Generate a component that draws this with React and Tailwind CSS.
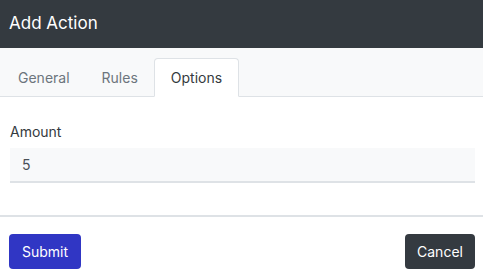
export default function App() {
	return (
		<div className="w-[483px] h-[278px] bg-white font-['Inter',sans-serif] text-[#212529] overflow-hidden">
			<div className="h-[48px] bg-[#343a40] flex items-center px-[9px]">
				<h1 className="text-white text-[17px] font-normal">Add Action</h1>
			</div>

			<div className="h-[49px] bg-[#f8f9fa] border-b border-[#dee2e6] flex items-end px-[2px]">
				<button className="h-[38px] px-4 text-[14px] text-[#6c757d]">General</button>
				<button className="h-[38px] px-4 text-[14px] text-[#6c757d]">Rules</button>
				<button className="h-[39px] -mb-px px-4 text-[14px] text-[#343a40] bg-white border border-[#dee2e6] border-b-white rounded-t">
					Options
				</button>
			</div>

			<div className="pl-[10px] pr-[8px] pt-[25px] h-[120px] border-b-2 border-[#dee2e6]">
				<label className="block text-[14px] text-[#343a40] leading-5">Amount</label>
				<input
					className="mt-[6px] w-full h-[35px] px-3 bg-[#f8f9fa] border-b-2 border-[#dee2e6] text-[14px] text-[#495057] outline-none"
					defaultValue="5"
				/>
			</div>

			<div className="flex justify-between pl-[9px] pr-[8px] pt-[17px]">
				<button className="h-[35px] w-[72px] rounded bg-[#3036c4] text-white text-[14px]">Submit</button>
				<button className="h-[35px] w-[70px] rounded bg-[#343a40] text-white text-[14px]">Cancel</button>
			</div>
		</div>
	);
}
